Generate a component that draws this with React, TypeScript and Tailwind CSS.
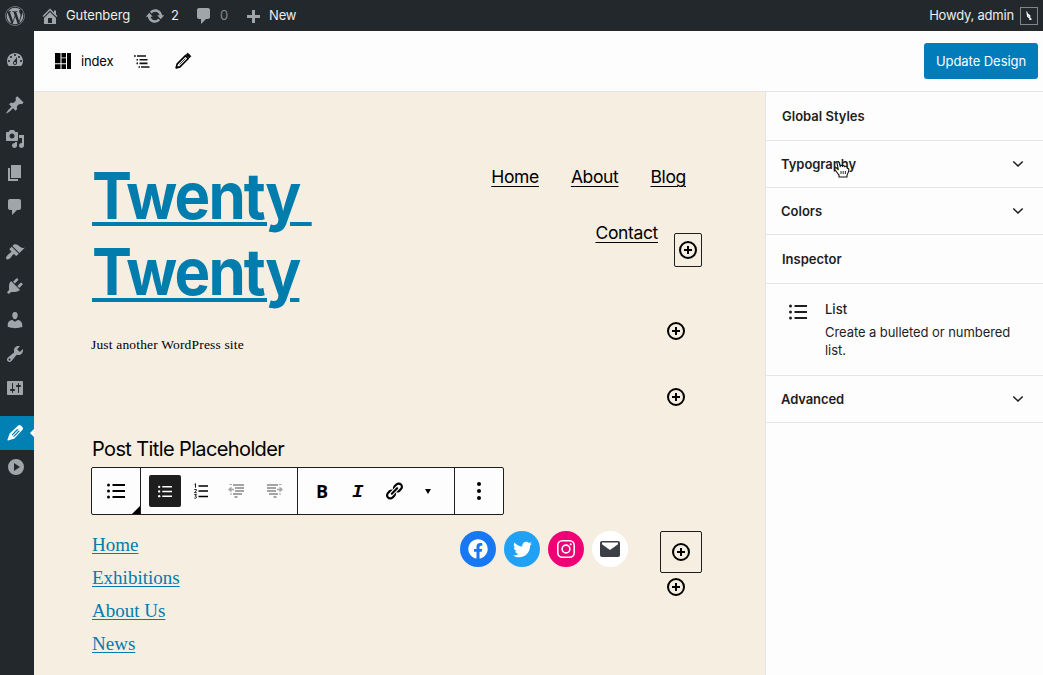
import type { ReactNode } from 'react';
import { FaWordpress, FaFacebook, FaTwitter } from 'react-icons/fa';

const paths = {
  home: 'M16 8.5l1.53 1.53-1.06 1.06L10 4.6l-6.47 6.49-1.06-1.06L10 2.5l4 4v-2h2v4zm-6-2.46l6 5.99V18H4v-5.97zM12 17v-5H8v5h4z',
  update:
    'M10.2 3.28c3.53 0 6.43 2.61 6.92 6h2.08l-3.5 4-3.5-4h2.32c-.45-1.97-2.21-3.45-4.32-3.45-1.45 0-2.73.71-3.54 1.78L4.95 5.66C6.23 4.2 8.11 3.28 10.2 3.28zm-.4 13.44c-3.52 0-6.43-2.61-6.92-6H.8l3.5-4c1.17 1.33 2.33 2.67 3.5 4H5.48c.45 1.97 2.21 3.45 4.32 3.45 1.45 0 2.73-.71 3.54-1.78l1.71 1.95c-1.28 1.46-3.15 2.38-5.25 2.38z',
  comments:
    'M5 2h9c1.1 0 2 .9 2 2v7c0 1.1-.9 2-2 2h-2l-5 5v-5H5c-1.1 0-2-.9-2-2V4c0-1.1.9-2 2-2z',
  plus: 'M17 9v3h-5v5H9v-5H4V9h5V4h3v5h5z',
  dashboard:
    'M3.76 16h12.48c1.1-1.37 1.76-3.11 1.76-5 0-4.42-3.58-8-8-8s-8 3.58-8 8c0 1.89.66 3.63 1.76 5zM10 4c.55 0 1 .45 1 1s-.45 1-1 1-1-.45-1-1 .45-1 1-1zM6 6c.55 0 1 .45 1 1s-.45 1-1 1-1-.45-1-1 .45-1 1-1zm8 0c.55 0 1 .45 1 1s-.45 1-1 1-1-.45-1-1 .45-1 1-1zm-5.37 5.55L12 7v6c0 1.1-.9 2-2 2s-2-.9-2-2c0-.57.24-1.08.63-1.45zM4 10c.55 0 1 .45 1 1s-.45 1-1 1-1-.45-1-1 .45-1 1-1zm12 0c.55 0 1 .45 1 1s-.45 1-1 1-1-.45-1-1 .45-1 1-1zm-5 3c0-.55-.45-1-1-1s-1 .45-1 1 .45 1 1 1 1-.45 1-1z',
  post: 'M10.44 3.02l1.82-1.82 6.36 6.35-1.83 1.82c-1.05-.68-2.48-.57-3.41.36l-.75.75c-.92.93-1.04 2.35-.35 3.41l-1.83 1.82-2.41-2.41-2.8 2.79c-.42.42-3.38 2.71-3.8 2.29s1.86-3.39 2.28-3.81l2.79-2.79L4.1 9.36l1.83-1.82c1.05.69 2.48.57 3.4-.36l.75-.75c.93-.92 1.05-2.35.36-3.41z',
  media:
    'M13 11V4c0-.55-.45-1-1-1h-1.67L9 1H5L3.67 3H2c-.55 0-1 .45-1 1v7c0 .55.45 1 1 1h10c.55 0 1-.45 1-1zM7 4.5c1.38 0 2.5 1.12 2.5 2.5S8.38 9.5 7 9.5 4.5 8.38 4.5 7 5.62 4.5 7 4.5zM14 6h5v10.5c0 1.38-1.12 2.5-2.5 2.5S14 17.88 14 16.5s1.12-2.5 2.5-2.5c.17 0 .34.02.5.05V9h-3V6zm-4 8.05V13h2v3.5c0 1.38-1.12 2.5-2.5 2.5S7 17.88 7 16.5 8.12 14 9.5 14c.17 0 .34.02.5.05z',
  page: 'M6 15V2h10v13H6zm-1 1h8v2H3V5h2v11z',
  appearance:
    'M14.48 11.06L7.41 3.99l1.5-1.5c.5-.56 2.3-.47 3.51.32 1.21.8 1.43 1.28 2.91 2.1 1.18.64 2.45 1.26 4.45.85zm-.71.71L6.7 4.7 4.93 6.47c-.39.39-.39 1.02 0 1.41l1.06 1.06c.39.39.39 1.03 0 1.42-.6.6-1.43 1.11-2.21 1.69-.35.26-.7.53-1.01.84C1.43 14.23.4 16.08 1.4 17.07c.99 1 2.84-.03 4.18-1.36.31-.31.58-.66.85-1.02.57-.78 1.08-1.61 1.69-2.21.39-.39 1.02-.39 1.41 0l1.06 1.06c.39.39 1.02.39 1.41 0z',
  plugins:
    'M13.11 4.36L9.87 7.6 8 5.73l3.24-3.24c.35-.34 1.05-.2 1.56.32.52.51.66 1.21.31 1.55zm-8 1.77l.91-1.12 9.01 9.01-1.19.84c-.71.71-2.63 1.16-3.82 1.16H6.14L4.9 17.26c-.59.59-1.54.59-2.12 0-.59-.58-.59-1.53 0-2.12l1.24-1.24v-3.88c0-1.13.4-3.19 1.09-3.89zm7.26 3.97l3.24-3.24c.34-.35 1.04-.21 1.55.31.52.51.66 1.21.31 1.55l-3.24 3.25z',
  users:
    'M10 9.25c-2.27 0-2.73-3.44-2.73-3.44C7 4.02 7.82 2 9.97 2c2.16 0 2.98 2.02 2.71 3.81 0 0-.41 3.44-2.68 3.44zm0 2.57L12.72 10c2.39 0 4.52 2.33 4.52 4.53v2.49s-3.65 1.13-7.24 1.13c-3.65 0-7.24-1.13-7.24-1.13v-2.49c0-2.25 1.94-4.48 4.47-4.48z',
  tools:
    'M16.68 9.77c-1.34 1.34-3.3 1.67-4.95.99l-5.41 6.52c-.99.99-2.59.99-3.58 0s-.99-2.59 0-3.57l6.52-5.42c-.68-1.65-.35-3.61.99-4.95 1.28-1.28 3.12-1.62 4.72-1.06l-2.89 2.89 2.82 2.82 2.86-2.87c.53 1.58.18 3.39-1.08 4.65zM3.81 16.21c.4.39 1.04.39 1.43 0 .4-.4.4-1.04 0-1.43-.39-.4-1.03-.4-1.43 0-.39.39-.39 1.03 0 1.43z',
  settings:
    'M18 16V4c0-.55-.45-1-1-1H3c-.55 0-1 .45-1 1v12c0 .55.45 1 1 1h14c.55 0 1-.45 1-1zM8 11h1c.55 0 1 .45 1 1s-.45 1-1 1H8v1.5c0 .28-.22.5-.5.5s-.5-.22-.5-.5V13H6c-.55 0-1-.45-1-1s.45-1 1-1h1V5.5c0-.28.22-.5.5-.5s.5.22.5.5V11zm5-2h-1c-.55 0-1-.45-1-1s.45-1 1-1h1V5.5c0-.28.22-.5.5-.5s.5.22.5.5V7h1c.55 0 1 .45 1 1s-.45 1-1 1h-1v5.5c0 .28-.22.5-.5.5s-.5-.22-.5-.5V9z',
  edit: 'M13.2 2.600C14 1.900 15 1.900 15.800 2.600L17.500 4.300C18.200 5 18.200 6 17.500 6.700L9.500 15.400L3.200 17.600C2.700 17.700 2.300 17.300 2.400 16.800L4.700 10.600ZM12.300 5.800L6.600 11.700L7.500 12.500L13.200 6.700ZM13.900 7.300L8.200 13.200L9 14L14.700 8.200Z',
  collapse: 'M10 2a8 8 0 1 0 0 16a8 8 0 1 0 0-16zM8 6l6 4-6 4z',
  link: 'M17.74 2.76c1.68 1.69 1.68 4.41 0 6.1l-1.53 1.52c-1.12 1.12-2.7 1.47-4.14 1.09l2.62-2.61.76-.77.76-.76c.84-.84.84-2.2 0-3.04-.84-.85-2.2-.85-3.04 0l-.77.76-3.38 3.38c-.37-1.44-.02-3.02 1.1-4.14l1.52-1.53c1.69-1.68 4.42-1.68 6.1 0zM8.59 13.43l5.34-5.34c.42-.42.42-1.1 0-1.52-.44-.43-1.13-.39-1.53 0l-5.33 5.34c-.42.42-.42 1.1 0 1.52.44.43 1.13.39 1.52 0zm-.76 2.29l4.14-4.15c.38 1.44.03 3.02-1.09 4.14l-1.52 1.53c-1.69 1.68-4.41 1.68-6.1 0-1.68-1.68-1.68-4.42 0-6.1l1.53-1.52c1.12-1.12 2.7-1.47 4.14-1.1l-4.14 4.15c-.85.84-.85 2.2 0 3.05.84.84 2.2.84 3.04 0z',
};

function Dash({ name, className = 'size-5' }: { name: keyof typeof paths; className?: string }) {
  return (
    <svg viewBox="0 0 20 20" fill="currentColor" fillRule="evenodd" className={`shrink-0 ${className}`}>
      <path d={paths[name]} />
    </svg>
  );
}

function Inserter() {
  return (
    <svg viewBox="0 0 20 20" className="size-5 shrink-0" fill="none" stroke="currentColor">
      <circle cx="10" cy="10" r="8" strokeWidth="2" />
      <path d="M10 6v8M6 10h8" strokeWidth="2" />
    </svg>
  );
}

function ListIcon({ className }: { className?: string }) {
  return (
    <svg viewBox="0 0 18 16" fill="currentColor" className={`shrink-0 ${className}`}>
      <circle cx="1.5" cy="2" r="1.5" />
      <circle cx="1.5" cy="8" r="1.5" />
      <circle cx="1.5" cy="14" r="1.5" />
      <path d="M5.500 1H18v2H5.500zM5.500 7H18v2H5.500zM5.500 13H18v2H5.500z" />
    </svg>
  );
}

function NumberedIcon() {
  return (
    <svg viewBox="0 0 14 16" className="h-4 w-3.5 shrink-0" fill="none" stroke="currentColor">
      <path d="M4.500 3H14M4.500 8H14M4.500 13.500H14" strokeWidth="1.4" />
      <path d="M.5 1.300l1-.6v4M.3 6.500h2v1.300l-1.800 1.900h2.200M.3 11.600h2.200l-1.200 1.600c1.600 0 1.600 2 0 2H.3" strokeWidth=".9" />
    </svg>
  );
}

function IndentIcon({ flip }: { flip?: boolean }) {
  return (
    <svg viewBox="0 0 17 14" className={`h-3.5 w-[17px] shrink-0 text-[#a4a4a4] ${flip ? '-scale-x-100' : ''}`} fill="currentColor">
      <path d="M1.500 0H4v1H1.500zM5 0h11v2H5zM7 3h9v2H7zM7 6h9v2H7zM5 9h9v2H5zM2 9.500h2v1H2zM6.500 12h3v2h-3zM0 5.500l3.500-3v2.200H6v1.600H3.500v2.200z" />
    </svg>
  );
}

const menu: { name: keyof typeof paths; box: string }[] = [
  { name: 'dashboard', box: 'mt-3 h-[34px]' },
  { name: 'post', box: 'mt-[11px] h-[34px]' },
  { name: 'media', box: 'h-[34px]' },
  { name: 'page', box: 'h-[34px]' },
  { name: 'comments', box: 'h-[34px]' },
  { name: 'appearance', box: 'mt-[11px] h-[34px]' },
  { name: 'plugins', box: 'h-[34px]' },
  { name: 'users', box: 'h-[34px]' },
  { name: 'tools', box: 'h-[34px]' },
  { name: 'settings', box: 'h-[34px]' },
];

function AdminBar() {
  return (
    <header className="flex h-[31px] shrink-0 items-center bg-[#23282d] text-[13px] text-[#eeeeee]">
      <FaWordpress className="ml-[5px] size-5 text-[#a0a5aa]" />
      <Dash name="home" className="ml-[15px] size-5 text-[#a0a5aa]" />
      <span className="ml-1.5 w-[65px] tracking-[-0.080px]">Gutenberg</span>
      <Dash name="update" className="ml-[14px] size-5 text-[#a0a5aa]" />
      <span className="ml-1.5 w-2">2</span>
      <Dash name="comments" className="ml-[15px] size-5 text-[#a0a5aa]" />
      <span className="ml-1.5 w-2 text-[#85898d]">0</span>
      <Dash name="plus" className="ml-[15px] size-5 text-[#a0a5aa]" />
      <span className="ml-1.5 tracking-[-0.15px]">New</span>
      <span className="ml-auto tracking-[-0.200px]">Howdy, admin</span>
      <span className="mr-[5px] ml-1.5 flex size-[18px] items-center justify-center border border-[#82868b]">
        <svg viewBox="0 0 8 10" className="h-2.5 w-2" fill="none" stroke="#fff" strokeWidth="1.100">
          <path d="M1.800.500L2.600 5.500M4.800 4.500V9M2 2.500L4.500 4.500L2.800 5.500L6.500 8.500" />
        </svg>
      </span>
    </header>
  );
}

function SideMenu() {
  return (
    <nav className="flex w-[34px] shrink-0 flex-col bg-[#23282d] text-[#a0a5aa]">
      {menu.map((m) => (
        <div key={m.name} className={`flex shrink-0 items-center pl-[5px] ${m.box}`}>
          <Dash name={m.name} />
        </div>
      ))}
      <div className="relative mt-[11px] flex h-[34px] shrink-0 items-center bg-[#0080b3] pl-[5px] text-white">
        <Dash name="edit" />
        <span className="absolute top-[13px] right-0 border-y-4 border-r-4 border-y-transparent border-r-white" />
      </div>
      <div className="flex h-[34px] shrink-0 items-center pl-1.5">
        <Dash name="collapse" />
      </div>
    </nav>
  );
}

function EditorHeader() {
  return (
    <div className="flex h-[61px] shrink-0 items-center border-b border-[#e2e4e7] bg-[#fdfdfd] text-[13px] text-black">
      <svg viewBox="0 0 16 16" className="ml-[21px] size-4" fill="currentColor">
        <path d="M0 0h5.500v10.300H0zM6.500 0H11v4.500H6.500zM12 0h4v16h-4zM6.500 5.300H11v5H6.500zM0 11.300h5.500V16H0zM6.500 11.300H11V16H6.500z" />
      </svg>
      <span className="ml-[10px] w-[32px] pt-0.5 tracking-[-0.15px]">index</span>
      <svg viewBox="0 0 16 13" className="ml-[21px] h-[13px] w-4" fill="none" stroke="#111" strokeWidth="1.600">
        <path d="M0 1h1.800M3 1h9M2.500 4.700h1.500M5.500 4.700h8M2.500 8.400h1.500M5.500 8.400h8M4.500 12h1.500M7 12h8.500" />
      </svg>
      <svg viewBox="0 0 20 20" className="ml-[23px] size-5" fill="none" stroke="#000">
        <path d="M3.200 16.800l.9-3.700L12.500 4.700l2.800 2.800-8.400 8.400z" strokeWidth="1.700" strokeLinejoin="round" />
        <path d="M13 3.700l1.700-1.700 3.300 3.300-1.700 1.700z" fill="#000" strokeWidth=".6" />
        <path d="M6.500 13.500l6-6" strokeWidth=".7" />
      </svg>
      <button className="mr-[5px] ml-auto h-9 w-[114px] rounded-[3px] bg-[#007cba] pt-0.5 text-[13px] tracking-[-0.05px] text-white">
        Update Design
      </button>
    </div>
  );
}

function Toolbar() {
  return (
    <div className="mt-1.5 -ml-px flex h-12 w-[413px] rounded-[2px] border border-[#1e1e1e] bg-[#fdfdfd] text-black">
      <div className="relative flex w-[49px] items-center border-r border-[#1e1e1e] pl-[15px]">
        <ListIcon className="h-4 w-[18px]" />
        <span className="absolute right-0 bottom-0 border-b-8 border-l-8 border-b-black border-l-transparent" />
      </div>
      <div className="flex w-[157px] items-center border-r border-[#1e1e1e] pl-2">
        <span className="flex size-8 items-center justify-center rounded-[2px] bg-[#1e1e1e] text-white">
          <ListIcon className="h-[13px] w-3.5" />
        </span>
        <span className="ml-[13px] flex">
          <NumberedIcon />
        </span>
        <span className="ml-5 flex">
          <IndentIcon />
        </span>
        <span className="ml-[21px] flex">
          <IndentIcon flip />
        </span>
      </div>
      <div className="flex w-[157px] items-center border-r border-[#1e1e1e]">
        <b className="ml-[18px] w-3 font-['Open_Sans',sans-serif] text-[18px] leading-none">B</b>
        <b className="ml-6 w-3 pt-0.5 font-['Liberation_Mono',monospace] text-[19px] leading-none italic">I</b>
        <Dash name="link" className="ml-5 size-5" />
        <span className="ml-[21px] border-x-[3.500px] border-t-[5px] border-x-transparent border-t-black" />
      </div>
      <div className="flex flex-1 flex-col items-center justify-center gap-[3px]">
        <i className="size-1 rounded-full bg-black" />
        <i className="size-1 rounded-full bg-black" />
        <i className="size-1 rounded-full bg-black" />
      </div>
    </div>
  );
}

function Social({ color, children }: { color: string; children: ReactNode }) {
  return <span className={`flex size-9 items-center justify-center rounded-full text-white ${color}`}>{children}</span>;
}

const navLink = 'underline decoration-1 underline-offset-[3px] tracking-[-0.350px]';

function Canvas() {
  return (
    <main className="flex w-[731px] shrink-0 flex-col bg-[#f5eee1] pr-[63px] pl-[58px] text-black">
      <div className="flex h-[340px] justify-between">
        <div className="pt-[66px]">
          <h1 className="origin-left scale-x-[0.93] text-[64.500px] leading-[76px] font-bold tracking-[-2.070px] text-[#007cad] underline decoration-4 underline-offset-[3px]">
            Twenty&nbsp;
            <br />
            Twenty
          </h1>
          <p className="mt-[25px] -ml-px font-['Liberation_Serif',serif] text-[13.500px] leading-5 tracking-[0.170px]">
            Just another WordPress site
          </p>
        </div>
        <div className="flex flex-col items-end pt-[72px] text-[17.500px] leading-[26px]">
          <div className="mr-4 flex gap-8">
            <a className={navLink}>Home</a>
            <a className={navLink}>About</a>
            <a className={navLink}>Blog</a>
          </div>
          <div className="mt-[30px] flex items-start">
            <a className={`mr-4 ${navLink}`}>Contact</a>
            <span className="mt-[13px] flex h-[34px] w-7 items-center justify-center rounded-[2px] border border-[#1e1e1e]">
              <Inserter />
            </span>
          </div>
          <span className="mt-[54px] mr-4">
            <Inserter />
          </span>
          <span className="mt-[46px] mr-4">
            <Inserter />
          </span>
        </div>
      </div>
      <h2 className="mt-[5px] text-[20px] leading-6 tracking-[-0.620px]">Post Title Placeholder</h2>
      <Toolbar />
      <div className="mt-3 flex items-start">
        <ul className="w-[368px] pt-px font-['Liberation_Serif',serif] text-[19px] leading-[33px] text-[#007cad] underline decoration-1 underline-offset-2">
          <li>Home</li>
          <li>Exhibitions</li>
          <li>About Us</li>
          <li>News</li>
        </ul>
        <div className="mt-1 flex gap-2">
          <Social color="bg-[#1877f2]">
            <FaFacebook className="size-5" />
          </Social>
          <Social color="bg-[#21a1f3]">
            <FaTwitter className="size-[19px]" />
          </Social>
          <Social color="bg-[#f00075]">
            <svg viewBox="0 0 18 18" className="size-[18px]" fill="none" stroke="#fff" strokeWidth="1.600">
              <rect x=".8" y=".8" width="16.400" height="16.400" rx="4.500" />
              <circle cx="9" cy="9" r="3.900" />
              <circle cx="13.700" cy="4.300" r="1.100" fill="#fff" stroke="none" />
            </svg>
          </Social>
          <Social color="bg-white">
            <svg viewBox="0 0 20 16" className="h-4 w-5">
              <rect width="20" height="16" rx="2" fill="#3c4046" />
              <path d="M2 1.500h16v1.800L10 9 2 3.300z" fill="#fff" />
            </svg>
          </Social>
        </div>
        <div className="mt-1 ml-auto flex w-[42px] flex-col">
          <span className="flex size-[42px] items-center justify-center rounded-[2px] border border-[#1e1e1e]">
            <Inserter />
          </span>
          <span className="mt-1 ml-1.5">
            <Inserter />
          </span>
        </div>
      </div>
    </main>
  );
}

function Chevron() {
  return (
    <svg viewBox="0 0 12 8" className="mr-[19px] ml-auto h-2 w-3" fill="none" stroke="#1e1e1e" strokeWidth="1.600">
      <path d="M1.300 1.500L6 6l4.700-4.500" />
    </svg>
  );
}

function Inspector() {
  const row = 'flex items-center border-b border-[#e2e4e7]';
  return (
    <aside className="flex-1 border-l border-[#e2e4e7] bg-[#fdfdfd] text-[13px] text-[#1e1e1e]">
      <div className={`${row} h-[49px] pt-0.5 pl-4 font-semibold`}>Global Styles</div>
      <div className={`${row} relative h-[47px] pl-[15px] font-semibold`}>
        <span className="pt-0.5 tracking-[-0.050px]">Typography</span>
        <Chevron />
        <svg viewBox="0 0 16 18" className="absolute top-[19px] left-[68px] h-[18px] w-4" fill="#fff" stroke="#111" strokeWidth="1.100" strokeLinejoin="round">
          <path d="M5 17v-2C3.500 13.500 2.500 11.500 1 9.500.3 8 2 7.300 3 8.300l1.300 1.400L3 3.200C2.700 1.600 4.600 1.200 5.100 2.700l1.200 4c-.2-1.700 1.900-1.800 2.200-.3.200-1.100 2-1 2.300.4.500-.9 2-.6 2.200.8.300 1.600 1.600.2 1.800 1.600.2 2.300-.9 4.300-1.800 6V17z" />
          <path d="M7 11v3M9.200 11v3M11.400 11v3" strokeWidth=".9" />
        </svg>
      </div>
      <div className={`${row} h-[47px] pl-[15px] font-semibold`}>
        <span className="pt-0.5">Colors</span>
        <Chevron />
      </div>
      <div className={`${row} h-[49px] pt-0.5 pl-4 font-semibold`}>Inspector</div>
      <div className="flex h-[92px] border-b border-[#e2e4e7] pt-4 pl-[23px]">
        <ListIcon className="mt-1 h-4 w-[18px]" />
        <div className="ml-[18px]">
          <div className="leading-[18px] font-medium">List</div>
          <div className="mt-[5px] w-[200px] leading-[18px] tracking-[-0.070px]">Create a bulleted or numbered list.</div>
        </div>
      </div>
      <div className={`${row} h-[47px] pl-[15px] font-semibold`}>
        <span className="pt-0.5 tracking-[-0.100px]">Advanced</span>
        <Chevron />
      </div>
    </aside>
  );
}

export default function App() {
  return (
    <div className="flex h-[675px] w-[1043px] flex-col overflow-hidden font-['Inter',sans-serif]">
      <AdminBar />
      <div className="flex min-h-0 flex-1">
        <SideMenu />
        <div className="flex min-w-0 flex-1 flex-col">
          <EditorHeader />
          <div className="flex min-h-0 flex-1">
            <Canvas />
            <Inspector />
          </div>
        </div>
      </div>
    </div>
  );
}
